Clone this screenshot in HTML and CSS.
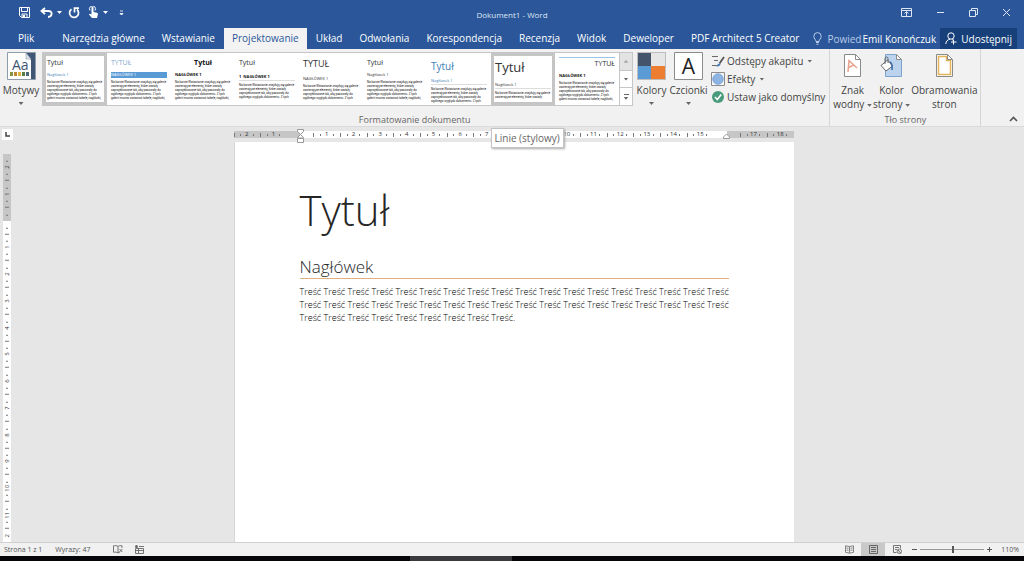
FILE: index.html
```html
<!DOCTYPE html>
<html lang="pl">
<head>
<meta charset="utf-8">
<title>Dokument1 - Word</title>
<link rel="stylesheet" href="styles.css">
</head>
<body>
<div class="app">
  <header class="titlebar">
    <div class="quick">
      <button class="icon-btn" aria-label="Zapisz"><svg width="11" height="11" viewBox="0 0 11 11"><path d="M.5.5h10v10h-8l-2-2zM2.5.5v4h6v-4M3 10.500V7h5v3.500" fill="none" stroke="#fff"/><path d="M4 8h2v2.500H4z" fill="#fff"/></svg></button>
      <button class="icon-btn undo" aria-label="Cofnij"><svg width="13" height="11" viewBox="0 0 13 11"><path d="M5 1L1.500 4 5 7.200M2 4h6.500c4.500 0 4 5.500-.5 6" fill="none" stroke="#fff" stroke-width="1.800"/></svg></button>
      <button class="caret light" aria-label="Więcej"></button>
      <button class="icon-btn redo" aria-label="Powtórz"><svg width="12" height="12" viewBox="0 0 12 12"><path d="M3.500 2.200A4.500 4.500 0 1 0 9 2.500M6.500 5.500V1.200h4.500" fill="none" stroke="#fff" stroke-width="1.700"/></svg></button>
      <button class="icon-btn touch" aria-label="Tryb dotykowy"><svg width="11" height="13" viewBox="0 0 11 13"><path d="M3.500 1.500c0-1.500 2-1.500 2 0V6l3.500.8c1 .3 1 1 .8 2L9 12H4L1 8.500c0-1 1-1.200 2.500 0z" fill="#fff"/><path d="M2 4.500A3 3 0 1 1 7 4.500" fill="none" stroke="#fff"/></svg></button>
      <button class="caret light" aria-label="Opcje dotyku"></button>
      <button class="icon-btn customize" aria-label="Dostosuj"><svg width="5" height="6" viewBox="0 0 5 6"><path d="M1 1h3M1 3.500h3L2.500 5z" stroke="#fff" stroke-width=".8" fill="#fff"/></svg></button>
    </div>
    <div class="doc-name">Dokument1 - Word</div>
    <div class="window">
      <button class="icon-btn" aria-label="Opcje wstążki"><svg width="11" height="9" viewBox="0 0 11 9"><path d="M.5.500h10v8H.5zM.5 2.500h10M5.500 8V4M3.500 5.500l2-2 2 2" fill="none" stroke="#dce6f4"/></svg></button>
      <button class="icon-btn" aria-label="Minimalizuj"><svg width="9" height="9" viewBox="0 0 9 9"><path d="M1 4.500h7" stroke="#dce6f4"/></svg></button>
      <button class="icon-btn" aria-label="Przywróć"><svg width="9" height="9" viewBox="0 0 9 9"><path d="M.5 2.500h6v6h-6zM2.500 2V.500h6v6H7" fill="none" stroke="#dce6f4"/></svg></button>
      <button class="icon-btn" aria-label="Zamknij"><svg width="9" height="9" viewBox="0 0 9 9"><path d="M1 1l7 7M8 1L1 8" stroke="#dce6f4"/></svg></button>
    </div>
  </header>

  <nav class="tabs">
    <button class="tab file">Plik</button>
    <button class="tab">Narzędzia główne</button>
    <button class="tab">Wstawianie</button>
    <button class="tab active">Projektowanie</button>
    <button class="tab">Układ</button>
    <button class="tab">Odwołania</button>
    <button class="tab">Korespondencja</button>
    <button class="tab">Recenzja</button>
    <button class="tab">Widok</button>
    <button class="tab">Deweloper</button>
    <button class="tab">PDF Architect 5 Creator</button>
    <button class="tell"><svg width="9" height="13" viewBox="0 0 9 13"><path d="M3 9.500C3 7.500.8 6.800.8 4.300a3.700 3.700 0 0 1 7.400 0C8.200 6.800 6 7.500 6 9.500zM3 10.500h3M3.500 12.300h2" fill="none" stroke="#b9cbe6"/></svg>Powied</button>
    <button class="user">Emil Konończuk</button>
    <button class="share"><svg width="12" height="13" viewBox="0 0 12 13"><circle cx="6" cy="4" r="3.200" fill="none" stroke="#fff"/><path d="M.8 12C1 9.500 2.500 7.500 5 7.200M7 7.500l1.500 1M8.500 7.500v5M6 10h5.500" fill="none" stroke="#fff"/></svg>Udostępnij</button>
  </nav>

  <section class="ribbon">
    <div class="group formatting">
      <div class="tools">
        <button class="big themes">
          <svg width="29" height="28" viewBox="0 0 29 28"><path d="M.5.5h28v27H.5z" fill="#fff" stroke="#8e9bab"/><path d="M19 1h9v26h-4V8z" fill="#3f5674"/><path d="M19 1v6h5z" fill="#dfe5ec" stroke="#8797aa" stroke-width=".6"/><text x="5" y="18" font-family="Open Sans" font-size="14" fill="#3d5471">Aa</text><path d="M3 20h3v4H3z" fill="#84923f"/><path d="M7 20h3v4H7z" fill="#c08432"/><path d="M11 20h3v4h-3z" fill="#e0b33f"/><path d="M15 20h3v4h-3z" fill="#587e46"/><path d="M19 20h3v4h-3z" fill="#49697a"/></svg>
          <span>Motywy</span><i class="caret"></i>
        </button>
        <div class="gallery">
          <button class="thumb selected"><b class="t">Tytuł</b><b class="h blue">Nagłówek 1</b><span class="p">Na karcie Wstawianie znajdują się galerie<br>zawierające elementy, które zostały<br>zaprojektowane tak, aby pasowały do<br>ogólnego wyglądu dokumentu. Z tych<br>galerii można wstawiać tabele, nagłówki,</span></button>
          <button class="thumb"><b class="t pale">TYTUŁ</b><b class="h band">NAGŁÓWEK 1</b><span class="p">Na karcie Wstawianie znajdują się galerie<br>zawierające elementy, które zostały<br>zaprojektowane tak, aby pasowały do<br>ogólnego wyglądu dokumentu. Z tych<br>galerii można wstawiać tabele, nagłówki,</span></button>
          <button class="thumb"><b class="t strong center">Tytuł</b><b class="h strong">NAGŁÓWEK 1</b><span class="p">Na karcie Wstawianie znajdują się galerie<br>zawierające elementy, które zostały<br>zaprojektowane tak, aby pasowały do<br>ogólnego wyglądu dokumentu. Z tych<br>galerii można wstawiać tabele, nagłówki,</span></button>
          <button class="thumb"><b class="t">Tytuł</b><b class="h strong lined gap">1&nbsp; NAGŁÓWEK 1</b><span class="p">Na karcie Wstawianie znajdują się galerie<br>zawierające elementy, które zostały<br>zaprojektowane tak, aby pasowały do<br>ogólnego wyglądu dokumentu. Z tych</span></button>
          <button class="thumb"><b class="t mid">TYTUŁ</b><b class="h gap">NAGŁÓWEK 1</b><span class="p">Na karcie Wstawianie znajdują się galerie<br>zawierające elementy, które zostały<br>zaprojektowane tak, aby pasowały do<br>ogólnego wyglądu dokumentu. Z tych</span></button>
          <button class="thumb"><b class="t">Tytuł</b><b class="h">Nagłówek 1</b><span class="p">Na karcie Wstawianie znajdują się galerie<br>zawierające elementy, które zostały<br>zaprojektowane tak, aby pasowały do<br>ogólnego wyglądu dokumentu. Z tych<br>galerii można wstawiać tabele, nagłówki,</span></button>
          <button class="thumb"><b class="t big-t blue">Tytuł</b><b class="h blue lined">Nagłówek 1</b><span class="p">Na karcie Wstawianie znajdują się galerie<br>zawierające elementy, które zostały<br>zaprojektowane tak, aby pasowały do<br>ogólnego wyglądu dokumentu. Z tych</span></button>
          <button class="thumb selected"><b class="t large">Tytuł</b><b class="h lined gap">Nagłówek 1</b><span class="p">Na karcie Wstawianie znajdują się galerie<br>zawierające elementy, które zostały</span></button>
          <button class="thumb"><b class="t right over">TYTUŁ</b><b class="h strong">NAGŁÓWEK 1</b><span class="p">Na karcie Wstawianie znajdują się galerie<br>zawierające elementy, które zostały<br>zaprojektowane tak, aby pasowały do<br>ogólnego wyglądu dokumentu. Z tych<br>galerii można wstawiać tabele, nagłówki,</span></button>
          <div class="scroller">
            <button class="off" aria-label="W górę"><i class="caret up"></i></button>
            <button aria-label="W dół"><i class="caret"></i></button>
            <button class="more" aria-label="Więcej"><i class="caret"></i></button>
          </div>
        </div>
        <button class="big colors">
          <svg width="29" height="28" viewBox="0 0 29 28"><path d="M0 0h29v28H0z" fill="#bdbdbd"/><path d="M1 1h13v13H1z" fill="#44546a"/><path d="M14 1h14v13H14z" fill="#e7e6e6"/><path d="M1 14h13v13H1z" fill="#5b9bd5"/><path d="M14 14h14v13H14z" fill="#ed7d31"/></svg>
          <span>Kolory</span><i class="caret"></i>
        </button>
        <button class="big fonts">
          <svg width="29" height="28" viewBox="0 0 29 28"><path d="M.5.5h28v27H.5z" fill="#fff" stroke="#8c8c8c"/><text x="14.500" y="22" text-anchor="middle" font-family="Open Sans" font-size="21" fill="#222">A</text></svg>
          <span>Czcionki</span><i class="caret"></i>
        </button>
        <div class="stack">
          <button class="small"><svg width="14" height="14" viewBox="0 0 14 14"><path d="M1 2.500h6M3 6.500h4M1 11.500h6" stroke="#6b6b6b"/><path d="M13 3L8.500 9.500" stroke="#555" stroke-width="1.800"/><path d="M5.500 12.500c1-2.500 2-3.500 3.500-3l.5 1c-.5 1.500-2 2-4 2z" fill="#4a7ebb"/></svg>Odstępy akapitu<i class="caret"></i></button>
          <button class="small"><svg width="14" height="14" viewBox="0 0 14 14"><path d="M.5.500h13v13H.5z" fill="#f7f7f7" stroke="#8c8c8c"/><circle cx="7" cy="7" r="5.300" fill="#8db4e2" stroke="#6a9bd5" stroke-width=".7"/></svg>Efekty<i class="caret"></i></button>
          <button class="small"><svg width="14" height="14" viewBox="0 0 14 14"><circle cx="7" cy="7" r="6" fill="#4a9a7d"/><path d="M4 7l2.300 2.500L10.200 4.500" fill="none" stroke="#fff" stroke-width="1.600"/></svg>Ustaw jako domyślny</button>
        </div>
      </div>
      <div class="label">Formatowanie dokumentu</div>
    </div>
    <div class="group background">
      <div class="tools">
        <button class="big">
          <svg width="17" height="23" viewBox="0 0 17 23"><path d="M.5.500h11l5 5v17H.5z" fill="#fff" stroke="#8a8a8a"/><path d="M11.500.500v5h5" fill="none" stroke="#8a8a8a"/><path d="M4 18L5 6.500 13 14M4.600 13.500l5.400-2.500" fill="none" stroke="#e9a28c" stroke-width="1.500"/></svg>
          <span>Znak<br>wodny <i class="caret"></i></span>
        </button>
        <button class="big">
          <svg width="23" height="23" viewBox="0 0 23 23"><path d="M5.500.500h11l5 5v17h-16z" fill="#bcd3ee" stroke="#7fa3cf"/><path d="M16.500.500v5h5z" fill="#fff" stroke="#8a8a8a"/><path d="M1 11.500L7.500 6l5 6-6.500 5z" fill="#fff" stroke="#666"/><path d="M5 10V4.500c0-2 3-2 3 0V9" fill="none" stroke="#666"/><path d="M10 8c2 1 2.500 3 2 8" fill="none" stroke="#3f6ea8" stroke-width="1.600"/></svg>
          <span>Kolor<br>strony <i class="caret"></i></span>
        </button>
        <button class="big">
          <svg width="17" height="23" viewBox="0 0 17 23"><path d="M.5.500h11l5 5v17H.5z" fill="#fff" stroke="#8a8a8a"/><path d="M2.500 2.500h8v4h4v14h-12z" fill="none" stroke="#e2b55a" stroke-width="1.500"/><path d="M11.500.500v5h5" fill="none" stroke="#8a8a8a"/></svg>
          <span>Obramowania<br>stron</span>
        </button>
      </div>
      <div class="label">Tło strony</div>
    </div>
    <button class="collapse" aria-label="Zwiń wstążkę"><svg width="9" height="6" viewBox="0 0 9 6"><path d="M1 5l3.500-3.500L8 5" fill="none" stroke="#555" stroke-width="1.600"/></svg></button>
  </section>

  <main class="workspace">
    <aside class="side">
      <button class="tabstop" aria-label="Tabulator"><svg width="5" height="5" viewBox="0 0 5 5"><path d="M1 0v4h4" fill="none" stroke="#444" stroke-width="1.500"/></svg></button>
      <div class="vruler"><span>2</span><span>1</span><span></span><span>1</span><span>2</span><span>3</span><span>4</span><span>5</span><span>6</span><span>7</span><span>8</span><span>9</span><span>10</span><span>11</span><span class="cut">2</span></div>
    </aside>
    <div class="canvas">
      <div class="hruler"><span>2</span><span>1</span><span class="mark"><svg width="7" height="14" viewBox="0 0 7 14"><path d="M.5.500h6v2L3.500 5.500.5 2.500zM.5 9V8.500l3-3 3 3V9zM.5 9.500h6v4h-6z" fill="#fff" stroke="#999"/></svg></span><span>1</span><span>2</span><span>3</span><span>4</span><span>5</span><span>6</span><span>7</span><span></span><span></span><span>10</span><span>11</span><span>12</span><span>13</span><span>14</span><span>15</span><span class="mark"><svg width="7" height="14" viewBox="0 0 7 14"><path d="M.5 9.500V8l3-3 3 3v1.500z" fill="#fff" stroke="#999"/></svg></span><span>17</span><span>18</span><div class="tooltip">Linie (stylowy)</div></div>
      <article class="page">
        <h1>Tytuł</h1>
        <h2>Nagłówek</h2>
        <p>Treść Treść Treść Treść Treść Treść Treść Treść Treść Treść Treść Treść Treść Treść Treść Treść Treść Treść Treść Treść Treść Treść Treść Treść Treść Treść Treść Treść Treść Treść Treść Treść Treść Treść Treść Treść Treść Treść Treść Treść Treść Treść Treść Treść Treść.</p>
      </article>
    </div>
  </main>

  <footer class="status">
    <span>Strona 1 z 1</span>
    <span class="words">Wyrazy: 47</span>
    <svg width="10" height="9" viewBox="0 0 10 9"><path d="M5 1.500C4 .500 2 .500.500.800v6.500C2 7 4 7 5 8V1.500C6 .500 7.500.500 9 .800V3M5 8c1-.7 1.500-.8 2-.8M6.500 4l2.800 3M9.300 4L6.500 7" fill="none" stroke="#666" stroke-width=".9"/></svg>
    <svg class="macro" width="9" height="9" viewBox="0 0 9 9"><path d="M.5 3.500h8v5h-8zM.5 5.500h8M3.500 3.500v5M4 1.500h5" fill="none" stroke="#666" stroke-width=".9"/><circle cx="1.500" cy="1.500" r="1.500" fill="#666"/></svg>
    <div class="views">
      <button class="view" aria-label="Odczyt"><svg width="9" height="9" viewBox="0 0 9 9"><path d="M4.500 1.500L.5.800v6.500l4 .9 4-.9V.8zv6.500M1.500 3l2 .3M1.500 5l2 .3M5.500 3.300l2-.3M5.500 5.300l2-.3" fill="none" stroke="#777" stroke-width=".9"/></svg></button>
      <button class="view on" aria-label="Układ wydruku"><svg width="9" height="9" viewBox="0 0 9 9"><path d="M.5.500h8v8h-8zM2 2.500h5M2 4.500h5M2 6.500h5" fill="none" stroke="#666"/></svg></button>
      <button class="view" aria-label="Układ sieci Web"><svg width="9" height="9" viewBox="0 0 9 9"><path d="M3.500 7.500h-3v-7h7v3M2 2.500h4M2 4.500h2" fill="none" stroke="#666" stroke-width=".9"/><circle cx="6.300" cy="6.300" r="2.200" fill="none" stroke="#666" stroke-width=".9"/><path d="M5 5l3 3.500" stroke="#666"/></svg></button>
      <button class="step" aria-label="Pomniejsz"><svg width="5" height="5" viewBox="0 0 5 5"><path d="M0 2.500h5" stroke="#555"/></svg></button>
      <input class="zoom" type="range" min="10" max="190" value="102" aria-label="Powiększenie">
      <button class="step" aria-label="Powiększ"><svg width="5" height="5" viewBox="0 0 5 5"><path d="M0 2.500h5M2.500 0v5" stroke="#555"/></svg></button>
      <span class="percent">110%</span>
    </div>
  </footer>
  <div class="taskbar"><span class="task"></span></div>
</div>
</body>
</html>
```
FILE: styles.css
```css
* { box-sizing: border-box; }
body { margin: 0; font-family: "Open Sans", "Noto Sans", sans-serif; font-size: 10px; color: #444; }
button { margin: 0; padding: 0; border: 0; background: none; font: inherit; color: inherit; white-space: nowrap; flex: none; }
svg { display: block; flex: none; }
.app { height: 100vh; display: flex; flex-direction: column; overflow: hidden; }

.titlebar { height: 28px; flex: none; display: grid; grid-template-columns: 1fr auto 1fr; align-items: center; background: #2b579a; color: #fff; font-size: 8px; }
.quick { display: flex; align-items: center; gap: 4px; padding: 0 19px 3px; height: 24px; }
.quick .undo { margin-left: 6px; }
.quick .redo { margin-left: 2px; }
.quick .touch { margin-left: 4px; }
.quick .customize { margin-left: 7px; }
.window { display: flex; justify-content: flex-end; gap: 24px; padding: 0 13px 4px 0; }
.caret { display: inline-block; vertical-align: middle; width: 5px; height: 3px; background: #666; clip-path: polygon(0 0, 100% 0, 50% 100%); }
.caret.light { background: #fff; }
.caret.up { background: #aaa; clip-path: polygon(0 100%, 100% 100%, 50% 0); }
.doc-name { color: #dce6f4; }

.tabs { height: 21px; flex: none; display: flex; gap: 1px; background: #2b579a; color: #fff; }
.tab { padding: 0 8px 1px; }
.tab.file { padding: 0 19px 1px 18px; }
.tab.active { background: #f3f3f3; color: #2b579a; }
.tell { display: flex; align-items: center; gap: 5px; margin-left: 5px; color: #b9cbe6; }
.user { margin-left: auto; }
.share { display: flex; align-items: center; gap: 4px; margin: 0 10px 0 3px; padding: 0 5px; background: #17407a; }

.ribbon { flex: none; display: flex; height: 78px; background: #f1f1f1; border-bottom: 1px solid #dadada; }
.group { display: flex; flex-direction: column; flex: none; border-right: 1px solid #d5d5d5; }
.tools { flex: 1; display: flex; padding-top: 3px; }
.label { text-align: center; font-size: 9px; line-height: 12px; color: #666; }
.big { display: flex; flex-direction: column; align-items: center; line-height: 14px; }
.big span { margin-top: 3px; }
.big > .caret { margin-top: 5px; }
.themes { width: 42px; }
.gallery { display: flex; height: 54px; border: 1px solid #c6c6c6; background: #fff; }
.thumb { width: 64px; padding: 3px; display: flex; flex-direction: column; text-align: left; overflow: hidden; border: 1px solid #fff; color: #333; }
.thumb.selected { border: 3px solid #c5c5c5; padding: 1px; }
.t { font-weight: 400; font-size: 7px; line-height: 12px; }
.t.mid { font-size: 9px; line-height: 14px; }
.t.big-t { font-size: 10px; line-height: 18px; }
.t.large { font-size: 13px; line-height: 20px; }
.t.right { text-align: right; }
.over { border-top: 1px solid #9dc3e6; }
.h { font-weight: 400; font-size: 4px; line-height: 6px; margin-top: 3px; }
.h.gap { margin-top: 5px; }
.band { background: #5b9bd5; color: #fff; }
.blue { color: #3e7fb8; }
.pale { color: #7fa8cf; }
.strong { font-weight: 700; color: #111; }
.center { text-align: center; }
.lined { border-bottom: 1px solid #ddd; }
.p { font-family: Roboto, sans-serif; font-size: 3px; line-height: 4px; font-weight: 400; color: #111; margin-top: 2px; }
.scroller { display: flex; flex-direction: column; width: 13px; border-left: 1px solid #c6c6c6; }
.scroller button { flex: 1; display: flex; align-items: center; justify-content: center; }
.scroller button + button { border-top: 1px solid #c6c6c6; }
.scroller .off { background: #e3e3e3; }
.scroller .more { flex-direction: column; gap: 2px; }
.more::before { content: ""; width: 5px; height: 1px; background: #666; }
.colors, .fonts { width: 37px; }
.stack { display: flex; flex-direction: column; gap: 4px; padding: 2px 4px 0 4px; }
.small { display: flex; align-items: center; gap: 2px; height: 14px; }
.small .caret { margin-left: 2px; }
.background .tools { gap: 1px; padding: 4px 3px 0; }
.background .big span { margin-top: 6px; }
.background .big { padding-top: 1px; }
.collapse { margin-left: auto; padding: 0 6px 4px; display: flex; align-items: flex-end; }

.workspace { flex: 1; min-height: 0; display: flex; background: #e6e6e6; }
.side { flex: none; width: 14px; display: flex; flex-direction: column; align-items: flex-end; }
.tabstop { width: 11px; height: 11px; margin: 2px 1px 14px 0; background: #fff; display: grid; place-items: center; }
.vruler { flex: 1; min-height: 0; width: 8px; margin-right: 3px; display: flex; flex-direction: column; overflow: hidden; background: linear-gradient(#c6c6c6 17.2%, #fff 17.2%); font-size: 6px; color: #333; }
.vruler span { flex: 2 0 0; min-height: 0; writing-mode: vertical-rl; rotate: 180deg; display: flex; align-items: center; justify-content: center; line-height: 8px; background: linear-gradient(#777, #777) center 25% / 2px 1px no-repeat, linear-gradient(#777, #777) center 75% / 2px 1px no-repeat, linear-gradient(#777, #777) center 0 / 4px 1px no-repeat; }
.vruler .cut { flex-grow: 1; background: none; }
.canvas { flex: 1; display: flex; flex-direction: column; align-items: center; padding-right: 11px; }
.hruler { position: relative; flex: none; width: 560px; height: 7px; margin: 4px 0 4px; display: grid; grid-template: 7px / repeat(21, 1fr); background: linear-gradient(90deg, #c6c6c6 11.9%, #fff 11.9% 88.1%, #c6c6c6 88.1%); font-size: 6px; line-height: 7px; color: #333; }
.hruler span { display: flex; justify-content: center; align-items: center; background: linear-gradient(#777, #777) 25% center / 1px 2px no-repeat, linear-gradient(#777, #777) 75% center / 1px 2px no-repeat, linear-gradient(#777, #777) 0 center / 1px 4px no-repeat; }
.hruler .mark { height: 14px; margin-top: -2px; background: none; }
.tooltip { position: absolute; left: 257px; top: -3px; z-index: 1; padding: 0 3px; border: 1px solid #c3c3c3; background: #fff; box-shadow: 1px 1px 2px #aaa; font-size: 10px; line-height: 18px; color: #666; white-space: nowrap; }
.page { flex: 1; width: 560px; padding: 34px 65px 0; background: #fff; border-left: 1px solid #d5d5d5; color: #262626; overflow: hidden; }
.page h1 { margin: 0; font-weight: 350; font-size: 42px; line-height: 68px; }
.page h2 { margin: 11px 0 6px; font-weight: 300; font-size: 17px; line-height: 23px; border-bottom: 1px solid #e0b080; }
.page p { margin: 0 -8px 0 0; font-weight: 300; font-size: 9px; line-height: 13px; color: #000; }

.status { flex: none; height: 14px; display: flex; align-items: center; padding-left: 4px; background: #f1f1f1; border-top: 1px solid #d0d0d0; font-size: 7px; color: #555; }
.words { margin: 0 22px 0 13px; }
.macro { margin-left: 12px; }
.views { margin-left: auto; display: flex; align-items: center; height: 13px; padding-right: 5px; }
.view { width: 24px; height: 13px; display: grid; place-items: center; }
.view.on { background: #c9c9c9; }
.step { padding: 0 3px; }
.zoom { appearance: none; width: 64px; height: 9px; margin: 0; background: linear-gradient(#999, #999) center / 100% 1px no-repeat; }
.zoom::-webkit-slider-thumb { appearance: none; width: 2px; height: 7px; background: #555; }
.percent { margin-left: 6px; }
.taskbar { flex: none; height: 5px; background: #05050a; display: flex; justify-content: center; }
.task { width: 10%; margin-right: 10%; background: #3a3a3e; }
```
